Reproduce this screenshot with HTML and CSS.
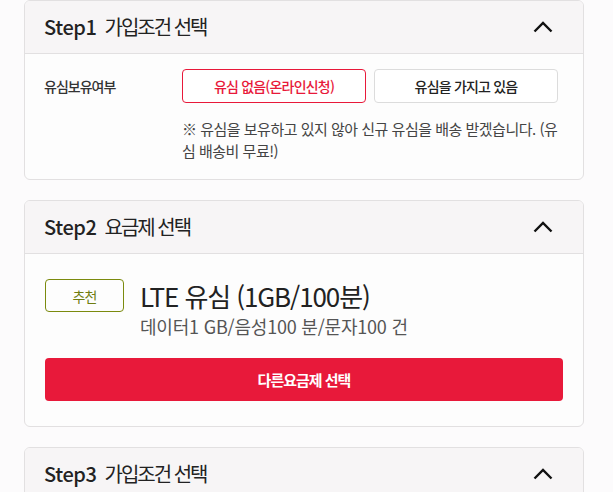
FILE: index.html
```html
<!DOCTYPE html>
<html lang="ko">
<head>
    <meta charset="UTF-8">
    <meta name="viewport" content="width=device-width, initial-scale=1.0">
    <title>가입 단계</title>
    <link rel="stylesheet" href="styles.css">
</head>
<body>
    <div class="steps">
        <section class="step">
            <div class="step-head">
                <h2><span class="step-no">Step1</span><span class="step-name">가입조건 선택</span></h2>
                <svg class="chevron" width="20" height="14" viewBox="0 0 20 14"><polyline points="1.5,11.5 10,3 18.5,11.5" fill="none" stroke="#111" stroke-width="2.4"/></svg>
            </div>
            <div class="step-body">
                <div class="field">
                    <div class="field-label">유심보유여부</div>
                    <div class="field-value">
                        <div class="choices">
                            <button class="choice active">유심 없음(온라인신청)</button>
                            <button class="choice">유심을 가지고 있음</button>
                        </div>
                        <p class="note">※ 유심을 보유하고 있지 않아 신규 유심을 배송 받겠습니다. (유심 배송비 무료!)</p>
                    </div>
                </div>
            </div>
        </section>

        <section class="step">
            <div class="step-head">
                <h2><span class="step-no">Step2</span><span class="step-name">요금제 선택</span></h2>
                <svg class="chevron" width="20" height="14" viewBox="0 0 20 14"><polyline points="1.5,11.5 10,3 18.5,11.5" fill="none" stroke="#111" stroke-width="2.4"/></svg>
            </div>
            <div class="step-body plan-body">
                <div class="plan">
                    <span class="badge">추천</span>
                    <div class="plan-info">
                        <div class="plan-name">LTE 유심 (1GB/100분)</div>
                        <div class="plan-desc">데이터1 GB/음성100 분/문자100 건</div>
                    </div>
                </div>
                <button class="primary">다른요금제 선택</button>
            </div>
        </section>

        <section class="step">
            <div class="step-head">
                <h2><span class="step-no">Step3</span><span class="step-name">가입조건 선택</span></h2>
                <svg class="chevron" width="20" height="14" viewBox="0 0 20 14"><polyline points="1.5,11.5 10,3 18.5,11.5" fill="none" stroke="#111" stroke-width="2.4"/></svg>
            </div>
            <div class="step-body">
                <div class="field">
                    <div class="field-label">유심보유여부</div>
                </div>
            </div>
        </section>
    </div>
</body>
</html>
```

FILE: styles.css
```css
body {
    margin: 0;
    background-color: #fcfbfc;
    font-family: "Noto Sans CJK KR", "Noto Sans", sans-serif;
    color: #222;
}
.steps {
    display: flex;
    flex-direction: column;
    gap: 20px;
    padding: 0 29px 0 24px;
}
.step {
    border: 1px solid #e2e0e1;
    border-radius: 6px;
    background-color: #fdfdfd;
    overflow: hidden;
}
.step-head {
    display: flex;
    align-items: center;
    justify-content: space-between;
    height: 52px;
    padding: 0 30px 0 19px;
    background-color: #f7f5f6;
    border-bottom: 1px solid #e2e0e1;
}
.step-head h2 {
    margin: 0;
    font-size: 20px;
    font-weight: 400;
    color: #222;
    line-height: 1;
}
.step-no {
    font-weight: 500;
    letter-spacing: -0.4px;
    margin-right: 8px;
}
.step-name {
    letter-spacing: -2px;
}
.chevron {
    display: block;
}
.step-body {
    padding: 15px 24px 17px 19px;
}
.field {
    display: flex;
}
.field-label {
    width: 138px;
    flex-shrink: 0;
    font-size: 14px;
    font-weight: 500;
    color: #333;
    letter-spacing: -1px;
    line-height: 35px;
}
.choices {
    display: flex;
    gap: 8px;
}
.choice {
    width: 184px;
    height: 34px;
    border: 1px solid #dcdcdc;
    border-radius: 4px;
    background-color: #fff;
    font-family: inherit;
    font-size: 14px;
    font-weight: 500;
    letter-spacing: -0.8px;
    color: #222;
}
.choice.active {
    border-color: #e8193a;
    color: #e8193a;
}
.note {
    margin: 15px 0 0;
    width: 378px;
    font-size: 15px;
    line-height: 22px;
    letter-spacing: -0.5px;
    word-break: break-all;
    color: #444;
}
.plan-body {
    padding: 25px 20px 25px 20px;
}
.plan {
    display: flex;
    align-items: flex-start;
    gap: 16px;
}
.badge {
    display: flex;
    align-items: center;
    justify-content: center;
    width: 77px;
    height: 31px;
    border: 1px solid #7b8a0e;
    border-radius: 4px;
    color: #6f7d10;
    font-size: 14px;
    letter-spacing: -1px;
}
.plan-info {
    margin-top: -2px;
}
.plan-name {
    font-size: 26px;
    line-height: 37px;
    letter-spacing: -1.1px;
    color: #222;
}
.plan-desc {
    font-size: 18px;
    line-height: 24px;
    letter-spacing: -0.2px;
    color: #555;
}
.primary {
    display: block;
    width: 100%;
    height: 43px;
    margin-top: 20px;
    border: none;
    border-radius: 4px;
    background-color: #e8193a;
    color: #fff;
    font-family: inherit;
    font-size: 15px;
    font-weight: 700;
    letter-spacing: -1px;
}
```
